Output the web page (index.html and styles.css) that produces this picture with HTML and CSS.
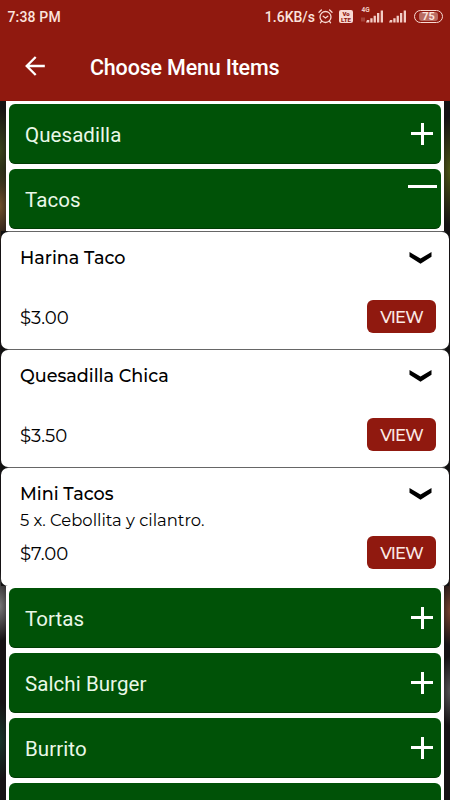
FILE: index.html
```html
<!DOCTYPE html>
<html lang="en">
<head>
<meta charset="utf-8">
<title>Choose Menu Items</title>
<link rel="stylesheet" href="styles.css">
</head>
<body>
<div class="screen">
  <header class="header">
    <div class="status">
      <span class="time">7:38 PM</span>
      <div class="indicators">
        <span class="speed">1.6KB/s</span>
        <svg class="alarm" width="15" height="15" viewBox="0 0 15 15" fill="none" stroke="#f8d9d2" stroke-width="1.3" stroke-linecap="round"><circle cx="7.5" cy="8" r="5.5"/><path d="M1 3.2 3.4 1M14 3.2 11.6 1M5.2 7.2 7.5 9l2.3-1.8M3.7 12.2 2.5 13.7M11.3 12.2l1.2 1.5"/></svg>
        <span class="volte"><span>Vo</span><span>LTE</span></span>
        <svg class="signal-main" width="25" height="18" viewBox="0 -2 25 18" fill="#f3cdc6"><text x="1.5" y="3.8" class="net">4G</text><path d="M1.5 9.5h1v4h-1zM3.5 9.5h1v4h-1z" opacity=".45"/><path d="M7 12h2.3v2.5H6zM10.3 10.2h2.3v4.3h-2.3zM13.6 7.8h2.3v6.7h-2.3zM17 5h2.3v9.5H17zM20.7 2.5H23v12h-2.3z"/></svg>
        <svg class="signal" width="18" height="16" viewBox="0 0 18 16" fill="#f3cdc6"><path d="M1 12h2.3v2.5H0zM4.3 10.2h2.3v4.3H4.3zM7.6 7.8h2.3v6.7H7.6zM11 5h2.3v9.5H11zM14.7 2.5H17v12h-2.3z"/></svg>
        <span class="battery"><span class="charge">75</span></span>
      </div>
    </div>
    <div class="toolbar">
      <svg class="back" width="20" height="20" viewBox="0 0 20 20" fill="none" stroke="#fff" stroke-width="2.3"><path d="M19.8 10H2M10.7 1 1.7 10l9 9"/></svg>
      <h1 class="title">Choose Menu Items</h1>
    </div>
  </header>
  <main class="content">
    <section class="group first">
      <div class="category"><span>Quesadilla</span><i class="plus"></i></div>
      <div class="category"><span>Tacos</span><i class="minus"></i></div>
    </section>
    <section class="cards">
      <article class="card">
        <div class="line"><h2 class="name">Harina Taco</h2><svg class="chev" width="23" height="12" viewBox="0 0 23 12"><path d="M.5 0 11.5 6.6 22.5 0v4.8L11.5 11.7.5 4.8z"/></svg></div>
        <p class="desc"></p>
        <div class="line bottom"><span class="price">$3.00</span><button class="view">VIEW</button></div>
      </article>
      <article class="card">
        <div class="line"><h2 class="name">Quesadilla Chica</h2><svg class="chev" width="23" height="12" viewBox="0 0 23 12"><path d="M.5 0 11.5 6.6 22.5 0v4.8L11.5 11.7.5 4.8z"/></svg></div>
        <p class="desc"></p>
        <div class="line bottom"><span class="price">$3.50</span><button class="view">VIEW</button></div>
      </article>
      <article class="card">
        <div class="line"><h2 class="name">Mini Tacos</h2><svg class="chev" width="23" height="12" viewBox="0 0 23 12"><path d="M.5 0 11.5 6.6 22.5 0v4.8L11.5 11.7.5 4.8z"/></svg></div>
        <p class="desc">5 x. Cebollita y cilantro.</p>
        <div class="line bottom"><span class="price">$7.00</span><button class="view">VIEW</button></div>
      </article>
    </section>
    <section class="group">
      <div class="category"><span>Tortas</span><i class="plus"></i></div>
      <div class="category"><span>Salchi Burger</span><i class="plus"></i></div>
      <div class="category"><span>Burrito</span><i class="plus"></i></div>
      <div class="category"></div>
    </section>
  </main>
</div>
</body>
</html>
```
FILE: styles.css
```css
* { box-sizing: border-box; }
body { margin: 0; font-family: Roboto, sans-serif; }
.screen { width: 450px; height: 800px; overflow: hidden; background: #111; }

.header { height: 101px; background: #90190f; color: #fff; }
.status { height: 33px; padding: 0 7px 0 7.5px; display: flex; justify-content: space-between; align-items: center; font-size: 14px; font-weight: 500; color: #fbe3dd; }
.time { letter-spacing: .15px; }
.indicators { display: flex; align-items: center; }
.alarm { margin-left: 3px; }
.volte { width: 14px; height: 13px; margin-left: 6px; border-radius: 2px; background: #f8d9d2; color: #90190f; display: flex; flex-direction: column; justify-content: center; align-items: center; font-size: 6px; font-weight: 900; line-height: 6px; }
.signal-main { margin-left: 7px; margin-top: -4px; }
.net { font: 700 6.5px Roboto, sans-serif; }
.signal { margin-left: 4px; margin-top: -2px; }
.battery { width: 29px; height: 13px; margin-left: 7px; padding: 1px 4px; border: 1.5px solid #f8d9d2; border-radius: 7px; display: flex; }
.charge { flex: 1; background: #b96b62; border-radius: 3px; font-size: 11px; line-height: 9.5px; font-weight: 700; text-align: center; }
.toolbar { height: 67px; padding-left: 25px; display: flex; align-items: center; }
.back { margin-top: -1px; }
.title { margin: 2px 0 0 45px; font-size: 21.5px; font-weight: 500; line-height: 28px; letter-spacing: -.18px; }

.content {
  height: 699px;
  background:
    radial-gradient(ellipse 14px 45px at 0 50px, #39431a, transparent),
    radial-gradient(ellipse 14px 40px at 0 105px, #70502a, transparent),
    radial-gradient(ellipse 14px 55px at 450px 70px, #4b5515, transparent),
    radial-gradient(ellipse 12px 35px at 450px 510px, #78422f, transparent),
    radial-gradient(ellipse 14px 35px at 0 505px, #777, transparent),
    radial-gradient(ellipse 12px 40px at 0 640px, #17352a, transparent),
    radial-gradient(ellipse 12px 35px at 450px 590px, #555, transparent),
    #151214;
}
.group { margin: 0 6px; padding: 2.5px 3px; background: #fff; display: flex; flex-direction: column; gap: 5.5px; }
.group.first { height: 130px; padding-top: 3px; }
.category { flex: none; height: 59.5px; padding: 1px 8px 0 16px; border-radius: 6px; background: #005207; border-bottom: 1px solid #003b04; display: flex; justify-content: space-between; align-items: center; font-size: 20.5px; color: #eaf8e8; }
.category span { padding-top: 2px; letter-spacing: .07px; }
.plus { width: 22px; height: 22px; background: linear-gradient(#fff, #fff) center / 22px 3px no-repeat, linear-gradient(#fff, #fff) center / 3px 22px no-repeat; }
.minus { width: 29px; height: 3px; margin: -24px -4px 0 0; background: #fff; }

.cards { margin: 0 1.5px 0 1px; display: flex; flex-direction: column; gap: 1px; background: linear-gradient(90deg, #111 0 5px, #666 8px 440px, #111 445px); padding-top: 1px; }
.card { height: 117.2px; padding: 12.5px 12.5px 0 19px; background: #fff; border-radius: 7px; font-family: Montserrat, Inter, sans-serif; color: #000; }
.line { display: flex; justify-content: space-between; }
.name { margin: 1px 0 -1px; font-size: 17.6px; line-height: 24px; font-weight: 500; }
.chev { margin: 7px 4.5px 0 0; }
.desc { margin: 1px 0 0; height: 25px; font-size: 16.4px; line-height: 28px; font-weight: 400; }
.bottom { align-items: center; margin-top: 5px; }
.price { padding-top: 3px; font-size: 18.1px; }
.view { width: 69px; height: 33px; padding: 2px 0 0; border: 0; border-radius: 6px; background: #90190f; color: #fbe9e5; font: 500 16.4px Montserrat, Inter, sans-serif; letter-spacing: -.8px; }
```
